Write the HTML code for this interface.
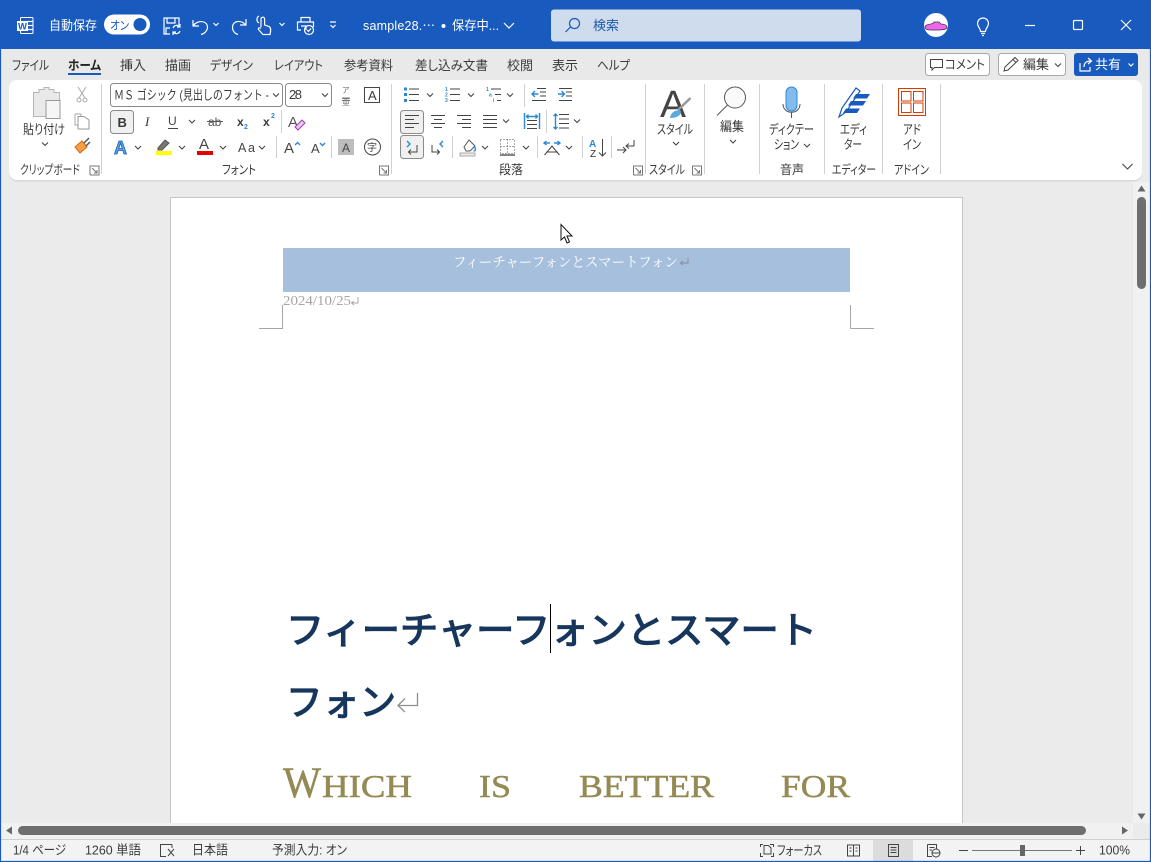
<!DOCTYPE html>
<html lang="ja"><head><meta charset="utf-8"><title>Word</title>
<style>
html,body{margin:0;padding:0;width:1151px;height:862px;overflow:hidden;background:#ebebeb}
svg{display:block;position:absolute;left:0;top:0}
text{font-family:"Liberation Sans","Noto Sans CJK JP",sans-serif;font-size:13px;fill:#3a3a3a;font-feature-settings:"palt"}
.lb{font-size:12.500px}
.w{fill:#fff}.b{fill:#185abd}
.s{fill:none;stroke:#444;stroke-width:1}
.g{fill:none;stroke:#777;stroke-width:1}
.l{fill:none;stroke:#fff;stroke-width:1.2}
.bl{fill:none;stroke:#2b88d8;stroke-width:1.4}
.sep{stroke:#d0d0d0;stroke-width:1}
.ch{fill:none;stroke:#444;stroke-width:1.1}
.ser{font-family:"Liberation Serif","Noto Serif CJK SC",serif;font-feature-settings:normal}
.h1{font-size:37px;font-feature-settings:normal;fill:#17365d;stroke:#17365d;stroke-width:1.300px}
.sub{font-size:32px;fill:#948a54;stroke:#948a54;stroke-width:.5px}
</style></head><body>
<svg width="1151" height="862" viewBox="0 0 1151 862" xmlns="http://www.w3.org/2000/svg">
<defs><path id="c" d="M-3 -1.500L0 1.500L3 -1.500" class="ch"/>
<path id="lau" d="M-4.500 4.500V-4.500H4.500V4.500H-4.500M-2.500 -2.500L2.500 2.500M2.500 -.5V2.500H-.5" class="g"/></defs>
<rect width="1151" height="862" fill="#ebebeb"/>
<!-- title -->
<rect width="1151" height="49" fill="#185abd"/>
<rect y="49" width="1151" height="31" fill="#e9e9e9"/>
<!-- word icon -->
<rect x="20.500" y="17.500" width="12.500" height="16" rx="1" fill="#185abd" stroke="#fff"/><path d="M27 21.500H33M27 25.500H33M27 29.500H33" class="l" stroke-width="1"/><rect x="17" y="21" width="11" height="10" fill="#fff"/><text x="18" y="29.500" style="font-size:9.500px;font-weight:bold;fill:#185abd">W</text>
<text x="49" y="30" class="w" textLength="48" lengthAdjust="spacingAndGlyphs">自動保存</text>
<rect x="104" y="14.500" width="46" height="20" rx="10" fill="#fff"/><text x="110" y="29.500" style="font-size:12px;fill:#185abd" textLength="19" lengthAdjust="spacingAndGlyphs">オン</text><circle cx="140" cy="24.500" r="6.500" fill="#185abd"/>
<!-- save -->
<path d="M170 34H164V18H179V25M167 18V23H175V18M166 34V28H170" class="l"/><path d="M173 28a4 4 0 0 1 7 -1M180 31a4 4 0 0 1 -7 1M180 24V27H177M173 35V32H176" class="l"/>
<!-- undo -->
<path d="M193 20V26H199M193.500 25.500C197 20 207 20 207.500 27C207.500 31 204 34 201 34.500" class="l"/><path d="M213.500 23L216 25.500L218.500 23" class="l" stroke-width="1"/>
<path d="M246 19V25H240M245.500 25C242 20 233 20 232.500 27C232.500 31 235 34 238 34.500" class="l"/>
<!-- touch -->
<path d="M261 27V19a1.800 1.800 0 0 1 3.600 0V25L269 26.500C271 27.500 271 30 270 34.500H263L258.500 29.500C258 28 259.500 27 261 28.500M259 23a4 4 0 0 1 0 -7" class="l" stroke-width="1"/><path d="M279.500 23L282 25.500L284.500 23" class="l" stroke-width="1"/>
<!-- print -->
<path d="M301 22V17.500H310V22M301 30H297.500V22H313.500V27M301 26H306V30" class="l" stroke-width="1"/><circle cx="309" cy="30" r="4.500" class="l" stroke-width="1"/><path d="M307 30L308.500 31.500L311 28.500" class="l" stroke-width="1"/>
<path d="M330 22H336M330.500 25L333 27.500L335.500 25" class="l" stroke-width="1"/>
<text x="363" y="30" class="w" style="font-size:12.500px" textLength="72">sample28.⋯</text><circle cx="443.500" cy="26" r="2" fill="#fff"/>
<text x="452" y="30" class="w" textLength="47" lengthAdjust="spacingAndGlyphs">保存中...</text><path d="M504 23L509 28L514 23" class="l"/>
<!-- search -->
<rect x="551" y="9.500" width="310" height="32" rx="3" fill="#cfdcee"/>
<circle cx="574.500" cy="23.500" r="5" fill="none" stroke="#185abd" stroke-width="1.200"/><path d="M570.500 27L565.500 32" fill="none" stroke="#185abd" stroke-width="1.200"/>
<text x="593" y="30" style="fill:#1c5aa8" textLength="26" lengthAdjust="spacingAndGlyphs">検索</text>
<!-- avatar -->
<circle cx="936" cy="25" r="12" fill="#fff"/><path d="M925 27C925 24.500 929 24.500 933 23.500L934 22H939L941 24C944 24 947 25 947 27.500C947 29 945 29.500 940 30H930C927 30 925 29 925 27Z" fill="#ee66ee" stroke="#333" stroke-width=".7"/>
<!-- bulb -->
<path d="M980.500 31.500C980.500 28 977.500 27 977.500 23.500A5.500 5.500 0 0 1 988.500 23.500C988.500 27 985.500 28 985.500 31.500ZM981 33.500H985M982 35.500H984" class="l" stroke-width="1"/>
<path d="M1025 25.500H1035" class="l" stroke-width="1"/>
<rect x="1073.500" y="20.500" width="9" height="9" rx="1" class="l" stroke-width="1"/>
<path d="M1121 20L1131 30M1131 20L1121 30" class="l" stroke-width="1"/>
<!-- tabs -->
<text x="12" y="70" textLength="37" lengthAdjust="spacingAndGlyphs">ファイル</text>
<text x="68" y="70" textLength="33" lengthAdjust="spacingAndGlyphs" style="font-weight:bold;fill:#222">ホーム</text>
<rect x="68" y="73" width="33" height="2" fill="#185abd"/>
<text x="120" y="70" textLength="26" lengthAdjust="spacingAndGlyphs">挿入</text>
<text x="165" y="70" textLength="26" lengthAdjust="spacingAndGlyphs">描画</text>
<text x="210" y="70" textLength="43" lengthAdjust="spacingAndGlyphs">デザイン</text>
<text x="274" y="70" textLength="49" lengthAdjust="spacingAndGlyphs">レイアウト</text>
<text x="344" y="70" textLength="49" lengthAdjust="spacingAndGlyphs">参考資料</text>
<text x="415" y="70" textLength="73" lengthAdjust="spacingAndGlyphs">差し込み文書</text>
<text x="507" y="70" textLength="26" lengthAdjust="spacingAndGlyphs">校閲</text>
<text x="552" y="70" textLength="26" lengthAdjust="spacingAndGlyphs">表示</text>
<text x="597" y="70" textLength="33" lengthAdjust="spacingAndGlyphs">ヘルプ</text>
<!-- top right buttons -->
<rect x="925.500" y="53.500" width="64" height="22" rx="3" fill="#fff" stroke="#a8a8a8"/>
<path d="M930.500 59.500H942.500V67.500H934.500L932 70V67.500H930.500Z" class="s"/>
<text x="945" y="69" textLength="40" lengthAdjust="spacingAndGlyphs">コメント</text>
<rect x="998.500" y="53.500" width="67" height="22" rx="3" fill="#fff" stroke="#a8a8a8"/>
<path d="M1004 71L1005 67L1015 57.500L1018 60.500L1008 70ZM1013 59.500L1016 62.500" class="s"/>
<text x="1023" y="69" textLength="26" lengthAdjust="spacingAndGlyphs">編集</text><use href="#c" x="1058" y="65"/>
<rect x="1074" y="53" width="64" height="23" rx="3" fill="#185abd"/>
<path d="M1080 63V71H1090V67M1084 67C1084 62 1087 61 1091 61M1088 58L1091.500 61L1088 64" class="l" stroke-width="1"/>
<text x="1095" y="69" class="w" textLength="26" lengthAdjust="spacingAndGlyphs">共有</text><path d="M1128.500 63.500L1131 66L1133.500 63.500" class="l" stroke-width="1"/>
<!-- ribbon card -->
<rect x="9" y="80" width="1133" height="100" rx="8" fill="#000" opacity=".08" transform="translate(0,1.500)"/>
<rect x="9" y="80" width="1133" height="100" rx="8" fill="#fff"/>
<g class="sep"><path d="M101.500 84V174M391.500 84V174M645.500 84V174M704.500 84V174M759.500 84V174M824.500 84V174M882.500 84V174M940.500 84V174M281.500 110V133M276.500 136V158M331.500 136V158M524.500 84V107M546.500 110V133M452.500 136V158M537.500 136V158M582.500 136V158M611.500 136V158"/></g>
<!-- clipboard -->
<path d="M33.500 116.500V92.500H39V89.500H44V87.500H49V89.500H54V92.500H59.500V100.500H46V116.500Z" fill="#e9e9e9" stroke="#b5b5b5"/>
<rect x="46" y="100.500" width="14" height="18" fill="#f6f6f6" stroke="#999"/>
<text x="23" y="134" textLength="42" lengthAdjust="spacingAndGlyphs">貼り付け</text><use href="#c" x="45" y="144"/>
<path d="M78 87L85 98M86 87L79 98" stroke="#aaa" fill="none"/><circle cx="79" cy="100" r="2" class="g" style="stroke:#aaa"/><circle cx="85" cy="100" r="2" class="g" style="stroke:#aaa"/>
<path d="M75 114H81V116M75 114V125H78" stroke="#aaa" fill="none"/><path d="M78 116.500H84L89 120V129H78Z" stroke="#999" fill="#fff"/>
<path d="M75 147L82 141L87 147L80 153Z" fill="#f7a043" stroke="#d2691e"/><path d="M84 143L89 138M86 146L90 142" fill="none" stroke="#555" stroke-width="1.500"/>
<text x="20" y="174" class="lb" textLength="60" lengthAdjust="spacingAndGlyphs">クリップボード</text><use href="#lau" x="94.500" y="170.500"/>
<!-- font -->
<rect x="110.500" y="83.500" width="172" height="23" rx="3" fill="#fff" stroke="#8a8a8a"/>
<text x="114" y="99.500" style="font-feature-settings:normal" textLength="155" lengthAdjust="spacingAndGlyphs">ＭＳ ゴシック (見出しのフォント -</text><use href="#c" x="276" y="95"/>
<rect x="285.500" y="83.500" width="46" height="23" rx="3" fill="#fff" stroke="#8a8a8a"/><text x="289" y="99" textLength="13">28</text><use href="#c" x="325" y="95"/>
<text x="342" y="93" style="font-size:8px;fill:#777">ア</text><path d="M342 98H350M342 100.500H350" stroke="#777"/><text x="342" y="105" style="font-size:8px;fill:#777">亜</text>
<rect x="364.500" y="87.500" width="15" height="15" fill="#fff" stroke="#444"/><text x="368" y="100" textLength="8">A</text>
<rect x="110.500" y="110.500" width="23" height="23" rx="3" fill="#f0f0f0" stroke="#8a8a8a"/>
<text x="117.500" y="127" style="font-weight:bold;font-size:13px">B</text>
<text x="145" y="126" class="ser" style="font-style:italic;font-size:13px">I</text>
<text x="168" y="125" style="font-size:12px;fill:#444">U</text><path d="M168 128.500H178" class="s"/><use href="#c" x="192" y="121.500"/>
<text x="208" y="126" style="font-size:12px;fill:#555">ab</text><path d="M207 121.500H223" stroke="#555" fill="none"/>
<text x="237" y="126" style="font-weight:bold;font-size:12px">x</text><text x="244" y="129" style="font-size:7px;fill:#2b88d8;font-weight:bold">2</text>
<text x="263" y="126" style="font-weight:bold;font-size:12px">x</text><text x="271" y="118" style="font-size:7px;fill:#2b88d8;font-weight:bold">2</text>
<text x="288" y="127" style="font-size:15px;fill:#555">A</text><path d="M295 127L302 120L305 123L298 130Z" fill="#e8c9ee" stroke="#a83bb5"/>
<text x="114" y="154" style="font-size:18px;font-weight:bold;fill:#5aaae0;stroke:#185abd;stroke-width:.8px">A</text><use href="#c" x="138" y="147.500"/>
<path d="M158 148L165 140L169 143L162 150H158Z" fill="#777" stroke="#555"/><rect x="156" y="151" width="16" height="4" fill="#ffff00"/><use href="#c" x="182" y="147.500"/>
<text x="199" y="149" style="font-size:15px;fill:#444">A</text><rect x="197" y="151" width="16" height="4" fill="#e60000"/><use href="#c" x="223" y="147.500"/>
<text x="238" y="152" style="font-size:12.500px;fill:#444" textLength="17">Aa</text><use href="#c" x="262" y="147.500"/>
<text x="284" y="153" style="font-size:15px;fill:#444">A</text><path d="M295 145L297.500 142.500L300 145" class="bl" stroke-width="1"/>
<text x="311" y="153" style="font-size:13px;fill:#444">A</text><path d="M320 143L322.500 145.500L325 143" class="bl" stroke-width="1"/>
<rect x="338" y="139" width="16" height="16" fill="#bdbdbd"/><text x="342" y="152" style="font-size:12px;fill:#444">A</text>
<circle cx="372.500" cy="147" r="8" class="s"/><text x="367" y="151" style="font-size:10px;fill:#444">字</text>
<text x="222" y="174" class="lb" textLength="34" lengthAdjust="spacingAndGlyphs">フォント</text><use href="#lau" x="384" y="170.500"/>
<!-- paragraph row1 -->
<g fill="#2b88d8"><rect x="404" y="87.500" width="3" height="3"/><rect x="404" y="93" width="3" height="3"/><rect x="404" y="99" width="3" height="3"/></g>
<path d="M409 89H419M409 94.500H419M409 100.500H419" class="s"/><use href="#c" x="430" y="95"/>
<text x="445" y="91" style="font-size:5px;fill:#2b88d8;font-weight:bold">1</text><text x="445" y="96.500" style="font-size:5px;fill:#2b88d8;font-weight:bold">2</text><text x="445" y="102" style="font-size:5px;fill:#2b88d8;font-weight:bold">3</text>
<path d="M450 89H460M450 94.500H460M450 100.500H460" class="s"/><use href="#c" x="471" y="95"/>
<text x="486" y="91" style="font-size:5px;fill:#2b88d8;font-weight:bold">1</text><text x="489" y="96.500" style="font-size:5px;fill:#2b88d8;font-weight:bold">a</text><text x="493" y="102" style="font-size:5px;fill:#2b88d8;font-weight:bold">i</text>
<path d="M491 89H501M495 94.500H501M497 100.500H501" class="s"/><use href="#c" x="510" y="95"/>
<path d="M537 88.500H546M540 92H546M540 96H546M532 100.500H546" class="s"/><path d="M532 94H538.500M535 91L532 94L535 97" class="bl" stroke-width="1.200"/>
<path d="M559 88.500H572M566 92H572M566 96H572M559 100.500H572" class="s"/><path d="M558 94H564.500M561.500 91L564.500 94L561.500 97" class="bl" stroke-width="1.200"/>
<!-- paragraph row2 -->
<rect x="400.500" y="110.500" width="23" height="23" rx="3" fill="#f0f0f0" stroke="#8a8a8a"/>
<path d="M405 115.500H419M405 119.500H414M405 123.500H419M405 127.500H414" class="s"/>
<path d="M431 115.500H445M434 119.500H442M431 123.500H445M434 127.500H442" class="s"/>
<path d="M457 115.500H471M462 119.500H471M457 123.500H471M462 127.500H471" class="s"/>
<path d="M483 115.500H497M483 119.500H497M483 123.500H497M483 127.500H497" class="s"/><use href="#c" x="506" y="121"/>
<path d="M524.500 113V129M539.500 113V129" class="bl"/><path d="M527 116.500H537M528.500 114.500L526.500 116.500L528.500 118.500M535.500 114.500L537.500 116.500L535.500 118.500" class="bl" stroke-width="1"/><path d="M527 120.500H537M527 124.500H537M527 128.500H537" class="s"/>
<path d="M559 114.500H569M559 119H569M559 123.500H569M559 128H569" class="s"/><path d="M555.500 114V129M553.500 116L555.500 114L557.500 116M553.500 127L555.500 129L557.500 127" class="bl" stroke-width="1"/><use href="#c" x="577" y="121"/>
<!-- row3 -->
<rect x="400.500" y="135.500" width="23" height="23" rx="3" fill="#f0f0f0" stroke="#8a8a8a"/>
<path d="M407 141L410 144L407 147" class="bl"/><path d="M417 145V152H409M411 149.500L408.500 152L411 154.500" class="s"/>
<path d="M432 145V152H439M437 149.500L439.500 152L437 154.500" class="s"/><path d="M443 141L440 144L443 147" class="bl"/>
<path d="M464 147L469 140L475 146L470 151H466Z" fill="#fff" stroke="#555"/><path d="M474 146C476 149 476 151 473.500 151" class="bl" stroke-width="1"/><rect x="460" y="153" width="15" height="3" fill="#eee" stroke="#888" stroke-width=".7"/><use href="#c" x="485" y="147.500"/>
<path d="M500.500 139.500H514.500V153.500H500.500ZM507.500 139.500V153.500M500.500 146.500H514.500" fill="none" stroke="#555" stroke-dasharray="1 2"/><path d="M500 155H515" stroke="#333" stroke-width="1.200"/><use href="#c" x="526" y="147.500"/>
<path d="M544.500 155L552 146L559.500 155M547 152H557" class="s"/><path d="M544 143H550M546.500 141L544 143L546.500 145M554 143H560M557.500 141L560 143L557.500 145" class="bl" stroke-width="1"/><use href="#c" x="569" y="147.500"/>
<text x="589" y="147" style="font-size:10px;font-weight:bold;fill:#2b88d8">A</text><text x="590" y="157" style="font-size:10px;fill:#333">Z</text><path d="M602.500 139V156M599 152.500L602.500 156L606 152.500" class="s"/>
<path d="M617 150H626M623 147L626 150L623 153" class="s"/><path d="M634 140V146H626M629 143.500L626 146L629 148.500" class="s"/>
<text x="499" y="174" class="lb" textLength="24" lengthAdjust="spacingAndGlyphs">段落</text><use href="#lau" x="638" y="170.500"/>
<!-- style -->
<text x="660" y="117" style="font-size:38px;fill:#444" textLength="26" lengthAdjust="spacingAndGlyphs">A</text>
<path d="M678 110L690.500 98" stroke="#999" stroke-width="2.500" fill="none"/><path d="M670 118C671 112 676 109 681 111C681 116 676 118 670 118Z" fill="#5aaae0"/>
<text x="657" y="134" textLength="36" lengthAdjust="spacingAndGlyphs">スタイル</text><use href="#c" x="676" y="143.500"/>
<text x="649" y="174" class="lb" textLength="36" lengthAdjust="spacingAndGlyphs">スタイル</text><use href="#lau" x="697" y="170.500"/>
<!-- edit -->
<circle cx="735" cy="97.500" r="10.500" fill="#fafafa" stroke="#555"/><path d="M727.500 105L717 115.500" stroke="#555" fill="none"/>
<text x="720" y="131" textLength="24" lengthAdjust="spacingAndGlyphs">編集</text><use href="#c" x="733" y="141.500"/>
<!-- mic -->
<rect x="786" y="87" width="11" height="24" rx="5.500" fill="#83bceb" stroke="#2b88d8"/><path d="M783 104C783 115 800 115 800 104M791.500 112V118" fill="none" stroke="#555"/>
<text x="769" y="134" textLength="45" lengthAdjust="spacingAndGlyphs">ディクテー</text>
<text x="774" y="149" textLength="25" lengthAdjust="spacingAndGlyphs">ション</text><use href="#c" x="807" y="145.500"/>
<text x="780" y="174" class="lb" textLength="24" lengthAdjust="spacingAndGlyphs">音声</text>
<!-- editor -->
<path d="M839 117L842 108L856 88L860 91L846 112Z" fill="#fff" stroke="#185abd" stroke-width="1.200"/>
<path d="M856 94H870L867 98.500H853ZM851 101H866L863 105.500H848ZM846 108.500H860L857 113H843Z" fill="#185abd"/>
<text x="840" y="134" textLength="27" lengthAdjust="spacingAndGlyphs">エディ</text>
<text x="844" y="149" textLength="18" lengthAdjust="spacingAndGlyphs">ター</text>
<text x="832" y="174" class="lb" textLength="44" lengthAdjust="spacingAndGlyphs">エディター</text>
<!-- addin -->
<rect x="898.500" y="88.500" width="27" height="27" fill="#fff" stroke="#d83b01" stroke-width="1"/>
<rect x="901.500" y="91.500" width="9.500" height="9.500" fill="none" stroke="#d83b01"/><rect x="913.500" y="91.500" width="9.500" height="9.500" fill="none" stroke="#d83b01"/><rect x="901.500" y="103" width="9.500" height="9.500" fill="none" stroke="#d83b01"/><rect x="913.500" y="103" width="9.500" height="9.500" fill="none" stroke="#d83b01"/>
<text x="903" y="134" textLength="18" lengthAdjust="spacingAndGlyphs">アド</text>
<text x="903" y="149" textLength="18" lengthAdjust="spacingAndGlyphs">イン</text>
<text x="894" y="174" class="lb" textLength="35" lengthAdjust="spacingAndGlyphs">アドイン</text>
<path d="M1122.500 164L1127.500 169L1132.500 164" class="ch"/>
<!-- page -->
<rect x="170.500" y="197.500" width="792" height="640" fill="#fff" stroke="#c6c6c6"/>
<rect x="283" y="248" width="567" height="44" fill="#a6bfdd"/>
<text x="453" y="267" class="ser w" style="font-size:14px" textLength="225" lengthAdjust="spacingAndGlyphs">フィーチャーフォンとスマートフォン</text>
<path d="M688 258V263H681M683 261L680.500 263L683 265" fill="none" stroke="#8a96a8" stroke-width="1.200"/>
<text x="283" y="305" class="ser" style="font-size:14px;fill:#a6a6a6" textLength="68" lengthAdjust="spacingAndGlyphs">2024/10/25</text>
<path d="M358 297V303H352M354 301L351.500 303L354 305" fill="none" stroke="#aaa" stroke-width="1"/>
<path d="M282.500 305V328.500H259M850.500 305V328.500H874" fill="none" stroke="#a6a6a6"/>
<text x="286" y="643" class="h1" textLength="531" lengthAdjust="spacingAndGlyphs">フィーチャーフォンとスマート</text>
<path d="M550.500 604V653" stroke="#000" fill="none"/>
<text x="286" y="715" class="h1" textLength="110" lengthAdjust="spacingAndGlyphs">フォン</text>
<path d="M417.500 693V705.500H398.500M405 698.500L398 705.500L405 712" fill="none" stroke="#8f8f8f" stroke-width="1.300"/>
<text x="283" y="797" class="ser sub" style="font-size:43px" textLength="38" lengthAdjust="spacingAndGlyphs">W</text>
<text x="322" y="797" class="ser sub" textLength="90" lengthAdjust="spacingAndGlyphs">HICH</text>
<text x="479" y="797" class="ser sub" textLength="32" lengthAdjust="spacingAndGlyphs">IS</text>
<text x="579" y="797" class="ser sub" textLength="135" lengthAdjust="spacingAndGlyphs">BETTER</text>
<text x="781" y="797" class="ser sub" textLength="69" lengthAdjust="spacingAndGlyphs">FOR</text>
<!-- cursor -->
<path d="M561 224.500V240L564.500 237L567 243L569.500 242L567 236H572Z" fill="#fff" stroke="#111" stroke-width="1"/>
<!-- vscroll -->
<rect x="1133" y="182" width="17" height="641" fill="#f1f1f1"/>
<path d="M1141.500 185.500L1145.500 191.500H1137.500Z" fill="#666"/>
<rect x="1137" y="197" width="9" height="92" rx="4.500" fill="#6e6e6e"/>
<path d="M1141.500 819.500L1145.500 813.500H1137.500Z" fill="#666"/>
<!-- hscroll -->
<rect x="1" y="823" width="1132" height="16" fill="#f1f1f1"/>
<path d="M6 830.500L12 826.500V834.500Z" fill="#666"/>
<rect x="18" y="826" width="1068" height="9" rx="4.500" fill="#6e6e6e"/>
<path d="M1128 830.500L1122 826.500V834.500Z" fill="#666"/>
<rect x="1133" y="823" width="17" height="16" fill="#ebebeb"/>
<!-- status -->
<rect x="1" y="839" width="1149" height="22" fill="#f3f3f3"/><path d="M1 839.500H1150" stroke="#cfcfcf"/>
<text x="13" y="854.500" textLength="53" lengthAdjust="spacingAndGlyphs">1/4 ページ</text>
<text x="85" y="854.500" textLength="56" lengthAdjust="spacingAndGlyphs">1260 単語</text>
<path d="M172 844.500H160.500V856.500H166" class="s"/><path d="M168 849L174 856M174 849L168 856M172 844.500V848" class="s"/>
<text x="192" y="854.500" textLength="36" lengthAdjust="spacingAndGlyphs">日本語</text>
<text x="272" y="854.500" textLength="75" lengthAdjust="spacingAndGlyphs">予測入力: オン</text>
<path d="M760.500 847V844.500H763M770 844.500H773.500V847M760.500 853V856.500H763M771 856.500H773.500V853" class="s"/><path d="M764 854V845.500H768.500L771 848V854Z" class="s"/>
<text x="777" y="855" textLength="45" lengthAdjust="spacingAndGlyphs">フォーカス</text>
<path d="M847.500 845H859.500V856H847.500ZM853.500 845V856M849.500 848H851.500M849.500 851H851.500M855.500 848H857.500M855.500 851H857.500" class="s"/>
<rect x="873" y="840" width="40" height="21" fill="#dcdcdc"/>
<path d="M888.500 844.500H898.500V856.500H888.500ZM890.500 847.500H896.500M890.500 850H896.500M890.500 852.500H896.500" class="s"/>
<path d="M927.500 844.500H936.500V849M927.500 844.500V856.500H932M929.500 847.500H934.500M929.500 850H932" class="s"/><circle cx="936" cy="853" r="4" class="s"/><path d="M932 853H940" class="s"/>
<path d="M959 850.500H968" class="s"/><path d="M972 850.500H1072" stroke="#777" fill="none"/><rect x="1020" y="845" width="5" height="11" fill="#666"/><path d="M1076 850.500H1085M1080.500 846V855" class="s"/>
<text x="1099" y="854.500" textLength="31" lengthAdjust="spacingAndGlyphs">100%</text>
<!-- window border -->
<path d="M.5 0V861.500H1150.500V0" fill="none" stroke="#185abd" stroke-width="1.200"/>
</svg>
</body></html>
